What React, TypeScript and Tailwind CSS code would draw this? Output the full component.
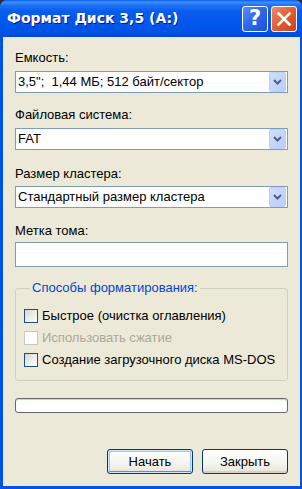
import React from "react";

const font = { fontFamily: '"Liberation Sans", Arial, sans-serif' };

function Arrow() {
  return (
    <svg width="9" height="6" viewBox="0 0 9 6">
      <path d="M1 1 L4.5 4.5 L8 1" fill="none" stroke="#4D6185" strokeWidth="2" />
    </svg>
  );
}

function Combo({ value }: { value: string }) {
  return (
    <div className="flex h-[22px] items-stretch border border-[#7F9DB9] bg-white">
      <div className="flex flex-1 items-center pl-[2px] text-[13px] leading-4 text-black whitespace-pre">{value}</div>
      <div className="mr-[1px] flex w-[17px] items-center justify-center rounded-[2px] border border-[#BCCFF9] bg-[linear-gradient(135deg,#D0DEFC_0%,#B9CDF9_100%)]">
        <Arrow />
      </div>
    </div>
  );
}

function Check({ label, disabled }: { label: string; disabled?: boolean }) {
  return (
    <div className="flex h-[22px] items-center">
      <div
        className={
          disabled
            ? "h-[14px] w-[14px] border border-[#CAC8BB] bg-white"
            : "h-[14px] w-[14px] border border-[#1C5180] bg-[linear-gradient(135deg,#D6D6D0_0%,#F4F4F2_70%,#FFFFFF_100%)]"
        }
      />
      <span className={"ml-[4px] text-[13px] leading-4 " + (disabled ? "text-[#ACA899]" : "text-black")}>{label}</span>
    </div>
  );
}

export default function App() {
  return (
    <div className="h-[489px] w-[302px] bg-[#2a2a3a]" style={font}>
      <div className="flex h-full flex-col overflow-hidden rounded-t-[7px] bg-[#0054E3]">
        <div className="relative flex h-[37px] items-center bg-[linear-gradient(to_bottom,#0A5EEC_0%,#3D8FFB_6%,#1F72F6_14%,#0A5DEC_30%,#0058EE_60%,#0053E6_85%,#0047D6_100%)] pl-[7px]">
          <span
            className="text-[14px] font-bold text-white"
            style={{ fontFamily: '"DejaVu Sans", Verdana, sans-serif', textShadow: "1px 1px #0A1883" }}
          >
            Формат Диск 3,5 (A:)
          </span>
          <div className="ml-auto mr-[5px] flex gap-[3px]">
            <div className="flex h-[26px] w-[26px] items-center justify-center rounded-[3px] border border-white bg-[linear-gradient(135deg,#5A8EF8_0%,#2E66EE_50%,#1C4FD8_100%)]">
              <span className="text-[21px] font-bold leading-none text-white" style={{ fontFamily: '"DejaVu Sans", Verdana, sans-serif' }}>?</span>
            </div>
            <div className="flex h-[26px] w-[26px] items-center justify-center rounded-[3px] border border-white bg-[linear-gradient(135deg,#F08C6C_0%,#E25B30_50%,#C9431D_100%)]">
              <svg width="16" height="16" viewBox="0 0 16 16">
                <path d="M2.5 2.5 L13.5 13.5 M13.5 2.5 L2.5 13.5" stroke="white" strokeWidth="2.6" strokeLinecap="square" />
              </svg>
            </div>
          </div>
        </div>
        <div className="mx-[3px] mb-[3px] mr-[2px] flex flex-1 flex-col bg-[#ECE9D8] px-3 pt-[13px] pb-[12px]">
          <div className="text-[13px] leading-4 text-black">Емкость:</div>
          <div className="mt-[5px]"><Combo value={'3,5";  1,44 МБ; 512 байт/сектор'} /></div>
          <div className="mt-[14px] text-[13px] leading-4 text-black">Файловая система:</div>
          <div className="mt-[5px]"><Combo value="FAT" /></div>
          <div className="mt-[16px] text-[13px] leading-4 text-black">Размер кластера:</div>
          <div className="mt-[4px]"><Combo value="Стандартный размер кластера" /></div>
          <div className="mt-[15px] text-[13px] leading-4 text-black">Метка тома:</div>
          <div className="mt-[3px] h-[25px] border border-[#7F9DB9] bg-white" />
          <fieldset className="mt-[13px] rounded-[3px] border border-[#D0D0BF] pl-[8px] pt-[9px] pb-[9px]">
            <legend className="ml-[6px] px-[2px] text-[13px] leading-4 text-[#0046D5]">Способы форматирования:</legend>
            <Check label="Быстрое (очистка оглавления)" />
            <Check label="Использовать сжатие" disabled />
            <Check label="Создание загрузочного диска MS-DOS" />
          </fieldset>
          <div className="mt-[17px] h-[15px] rounded-[3px] border border-[#686868] bg-white shadow-[inset_0_1px_1px_#D0D0D0]" />
          <div className="mt-[36px] flex justify-end gap-[9px]">
            <button className="h-[25px] w-[86px] rounded-[3px] border border-[#003C74] bg-[linear-gradient(to_bottom,#FFFFFF_0%,#F4F4F0_60%,#E6E3DA_100%)] text-[13px] text-black shadow-[inset_0_0_0_1px_#CEE7FF,inset_0_-2px_0_#6982EE,inset_0_0_0_2px_#A8C4F3]">
              Начать
            </button>
            <button className="h-[25px] w-[86px] rounded-[3px] border border-[#003C74] bg-[linear-gradient(to_bottom,#FFFFFF_0%,#F4F4F0_60%,#E6E3DA_100%)] text-[13px] text-black shadow-[inset_0_-2px_0_#D6D0C5]">
              Закрыть
            </button>
          </div>
        </div>
      </div>
    </div>
  );
}
